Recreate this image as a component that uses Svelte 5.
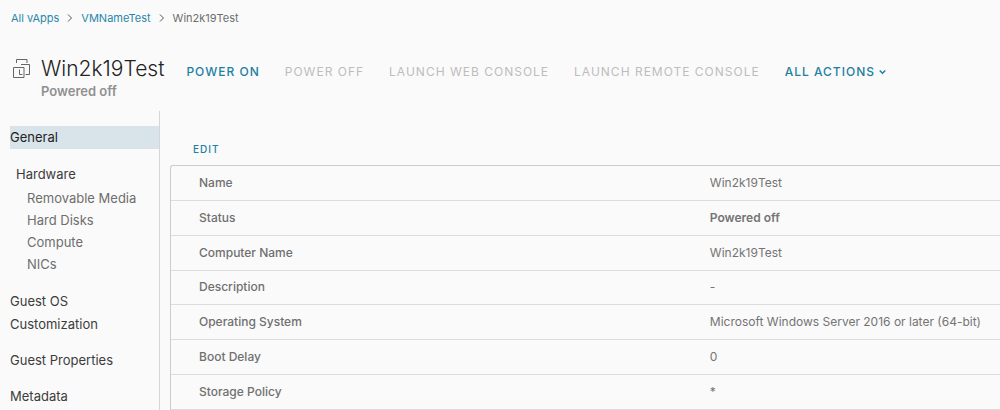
<script>
  const actions = [
    { label: 'Power on', disabled: false },
    { label: 'Power off', disabled: true },
    { label: 'Launch web console', disabled: true },
    { label: 'Launch remote console', disabled: true },
  ];
  const hardware = ['Removable Media', 'Hard Disks', 'Compute', 'NICs'];
  const sections = ['Guest OS Customization', 'Guest Properties', 'Metadata'];
  const details = [
    { name: 'Name', value: 'Win2k19Test' },
    { name: 'Status', value: 'Powered off', strong: true },
    { name: 'Computer Name', value: 'Win2k19Test' },
    { name: 'Description', value: '-' },
    { name: 'Operating System', value: 'Microsoft Windows Server 2016 or later (64-bit)' },
    { name: 'Boot Delay', value: '0' },
    { name: 'Storage Policy', value: '*' },
  ];
</script>

{#snippet separator()}
  <svg class="sep" width="6" height="8" viewBox="0 0 6 8" aria-hidden="true"><path d="M1 .5 4.5 4 1 7.5" /></svg>
{/snippet}

<nav class="crumbs" aria-label="Breadcrumb">
  <a href="#vapps">All vApps</a>
  {@render separator()}
  <a href="#vapp">VMNameTest</a>
  {@render separator()}
  <span>Win2k19Test</span>
</nav>

<header>
  <svg class="vm" width="20" height="20" viewBox="0 0 20 20" aria-hidden="true">
    <path d="M4.5 5V1.500h10.500V5M1.500 9.500h10.500v10h-10.500zM9 6.500h8.500v10h-4M7.500 11.500v5H10.500" />
  </svg>
  <div class="title">
    <h1>Win2k19Test</h1>
    <p>Powered off</p>
  </div>
  <div class="actions">
    {#each actions as action}
      <button disabled={action.disabled}>{action.label}</button>
    {/each}
    <button class="menu">
      All actions
      <svg width="7" height="6" viewBox="0 0 7 6" aria-hidden="true"><path d="M.7 1.500 3.500 4.300 6.300 1.500" /></svg>
    </button>
  </div>
</header>

<div class="body">
  <nav class="side" aria-label="Sections">
    <a class="item active" href="#general">General</a>
    <div class="group">
      <a class="head" href="#hardware">Hardware</a>
      {#each hardware as label}
        <a class="sub" href="#hardware">{label}</a>
      {/each}
    </div>
    {#each sections as label}
      <a class="item" href="#section">{label}</a>
    {/each}
  </nav>
  <main>
    <button class="edit">Edit</button>
    <table>
      <tbody>
        {#each details as row}
          <tr>
            <th scope="row">{row.name}</th>
            <td class:strong={row.strong}>{row.value}</td>
          </tr>
        {/each}
      </tbody>
    </table>
  </main>
</div>

<style>
  :global(body) {
    background: #fafafa;
    color: #565656;
    font-family: Inter, 'Liberation Sans', sans-serif;
  }
  a { color: inherit; text-decoration: none; }
  svg { fill: none; stroke: currentColor; flex: none; }
  button {
    padding: 0;
    border: 0;
    background: none;
    color: #217fa0;
    font: 500 12px/16px Inter, 'Liberation Sans', sans-serif;
    letter-spacing: 1px;
    text-transform: uppercase;
    white-space: nowrap;
    cursor: pointer;
  }
  button:disabled { color: #bdbdbd; font-weight: 400; cursor: default; }
  .crumbs {
    display: flex;
    align-items: center;
    gap: 8px;
    padding: 10px 11px 0;
    font-size: 11px;
    line-height: 16px;
    color: #6e6e6e;
  }
  .crumbs a { color: #2a87a8; }
  .sep { stroke: #555; }
  header {
    display: flex;
    align-items: flex-start;
    padding: 29px 12px 0;
  }
  .vm { margin: 3px 9px 0 0; color: #666; }
  h1 {
    margin: 0;
    font-size: 21px;
    font-weight: 300;
    line-height: 27px;
    color: #222;
  }
  .title p {
    margin: 0;
    font-size: 13px;
    font-weight: 600;
    line-height: 18px;
    color: #909090;
  }
  .actions {
    display: flex;
    gap: 25px;
    margin: 9px 0 0 22px;
  }
  .menu { display: flex; align-items: center; gap: 4px; }
  .menu svg { stroke-width: 1.5; }
  .body { display: flex; padding-top: 11px; }
  .side {
    box-sizing: border-box;
    flex: none;
    width: 160px;
    padding: 15px 0 0 10px;
    border-right: 1px solid #d6d6d6;
    font-size: 13px;
    line-height: 23px;
    color: #3c3c3c;
  }
  .side a { display: block; }
  .side .item { margin-bottom: 13px; padding-right: 36px; }
  .side .active { margin-bottom: 14px; padding-right: 0; background: #d9e4ea; color: #222; }
  .group { margin-bottom: 15px; padding-left: 6px; }
  .sub { padding-left: 11px; line-height: 22px; color: #6e6e6e; }
  .head { margin-bottom: 1px; }
  .side .item:last-child { margin-bottom: 0; }
  main { flex: 1; min-width: 0; padding: 30px 0 0 10px; }
  .edit { display: block; margin: 0 0 8px 23px; font-size: 10px; }
  table {
    width: 100%;
    height: 245px;
    border: 1px solid #ccc;
    border-right: 0;
    border-bottom: 0;
    border-radius: 3px 0 0;
    border-spacing: 0;
    font-size: 12px;
    line-height: 18px;
  }
  th, td {
    padding: 0;
    border-bottom: 1px solid #dcdcdc;
    text-align: left;
    white-space: nowrap;
  }
  th { width: 65%; padding-left: 28px; font-weight: 500; color: #707070; }
  td { color: #747474; }
  .strong { font-weight: 600; }
</style>
